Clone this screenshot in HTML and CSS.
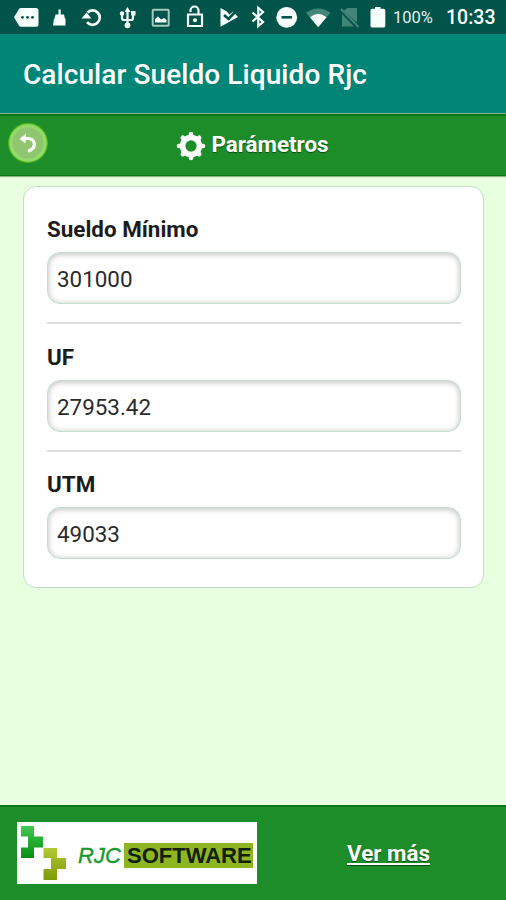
FILE: index.html
```html
<!DOCTYPE html>
<html lang="es">
<head>
<meta charset="utf-8">
<title>Calcular Sueldo Liquido Rjc</title>
<link rel="stylesheet" href="styles.css">
</head>
<body>
<div class="status">
  <svg viewBox="10 0 34 34"><path d="M14 17.3l5-8.4q.8-1 2-1H36q2.500 0 2.500 2.500v13.800q0 2.500-2.500 2.500H21q-1.200 0-2-1z"/><g class="dark"><circle cx="22.500" cy="17.300" r="1.400"/><circle cx="27.500" cy="17.300" r="1.400"/><circle cx="32.500" cy="17.300" r="1.400"/></g></svg>
  <svg viewBox="44 0 32 34"><path d="M58.500 9.500h2.200v5H64l1 4.500H54.500L55.500 14.500h3zM54 18.500h11.500v7H53z"/></svg>
  <svg viewBox="76 0 34 34"><path class="line w3" d="M87.500 12.500A7.200 7.200 0 1 1 87 22.200M86.500 14v3"/><path d="M81.500 18.500l5-6 5 6z"/></svg>
  <svg viewBox="110 0 34 34"><path class="line w2" d="M127.500 11v14M122 15v3q0 2 2 2h7q2 0 2-2v-5"/><path d="M124.500 12l3-5 3 5zM131 11h4.500v4.500H131z"/><circle cx="122" cy="13.500" r="2.200"/><circle cx="127.500" cy="25.300" r="2.900"/></svg>
  <svg viewBox="144 0 34 34"><rect class="soft" x="152.700" y="9.700" width="16" height="16" rx="1"/><path d="M155 22.500V19l3-2.500 3 3 3-1.500 2.500 2v2.500z"/></svg>
  <svg viewBox="178 0 34 34"><path class="line w2" d="M190.500 12v-1.500a4 4 0 0 1 8 0V14M188 14.500h14V26h-14z"/><circle cx="195" cy="20.300" r="2"/></svg>
  <svg viewBox="212 0 32 34"><path d="M220.500 8l6 3.300 3 3.200 3.500-3 5 5.500-17.500 9.700z"/><path class="line darkline" d="M224 15l4.500 4 7-7.500"/></svg>
  <svg viewBox="244 0 28 34"><path class="line w2" d="M252.500 12.500l10.500 9.500-4.700 4V8l4.700 4-10.500 9.500"/></svg>
  <svg viewBox="272 0 30 34"><circle cx="286.700" cy="17.400" r="10.400"/><path class="darkline" d="M281.500 17.300h10.500"/></svg>
  <svg viewBox="302 0 32 34"><path class="faint" d="M306 12.700q12-8.600 24.500 0L318.200 27z"/><path d="M310 17.200q8.200-7 16.500 0l-8.300 10z"/></svg>
  <svg viewBox="334 0 30 34"><path class="faint" d="M347.500 8H357v14.500L343.500 11zM342 14l12 12.500h-12z"/><path class="faintline" d="M341 9l17.500 18"/></svg>
  <svg viewBox="364 0 29 34"><path d="M375 7h5.500v1.700h3q1.800 0 1.800 1.800V26q0 1.500-1.800 1.500h-11.200q-1.800 0-1.800-1.500V10.500q0-1.800 1.800-1.800H375z"/></svg>
  <span class="battery">100%</span>
  <span class="clock">10:33</span>
</div>
<header class="appbar">Calcular Sueldo Liquido Rjc</header>
<div class="toolbar">
  <svg class="back" viewBox="0 0 42 42"><circle class="ring" cx="21" cy="21" r="19.300"/><circle class="disc" cx="21" cy="21" r="15.500"/><path class="arrow" d="M16 16.500h4.500c8 0 10 9.500.5 12.800"/><path class="head" d="M12.500 17l6.500-5.500-.5 10z"/></svg>
  <h1>
    <svg class="gear" viewBox="-15 -15 30 30"><circle class="hub" r="8.400"/><g class="teeth"><path d="M0-9.500v-2.500M0 9.500v2.500M9.500 0h2.500M-9.500 0h-2.500M7-7l1.200-1.200M7 7l1.200 1.200M-7-7l-1.200-1.200M-7 7l-1.200 1.200"/></g></svg>
    <span>Parámetros</span>
  </h1>
</div>
<main>
  <form class="card">
    <div class="field"><label for="sm">Sueldo Mínimo</label><input id="sm" value="301000"></div>
    <div class="field"><label for="uf">UF</label><input id="uf" value="27953.42"></div>
    <div class="field"><label for="utm">UTM</label><input id="utm" value="49033"></div>
  </form>
</main>
<footer>
  <div class="logo">
    <svg viewBox="0 0 49 62">
      <defs>
        <linearGradient id="g" x1="0" y1="0" x2="0" y2="1"><stop offset="0" stop-color="#43c954"/><stop offset="1" stop-color="#078d10"/></linearGradient>
        <linearGradient id="l" x1="0" y1="0" x2="0" y2="1"><stop offset="0" stop-color="#b4c936"/><stop offset="1" stop-color="#7c9c08"/></linearGradient>
      </defs>
      <path fill="url(#g)" d="M4 4h13v10.500h9v11h-9V36H4V25.500h7v-11H4z"/>
      <path fill="url(#l)" d="M26.500 26H40v10h9v11h-9v11H26.500V47h7.500V36h-7.500z"/>
    </svg>
    <span class="rjc">RJC</span><span class="soft-name">SOFTWARE</span>
  </div>
  <a href="#">Ver más</a>
</footer>
</body>
</html>
```
FILE: styles.css
```css
* { box-sizing: border-box; }
body {
  margin: 0;
  height: 900px;
  display: flex;
  flex-direction: column;
  background: #e8ffe0;
  font-family: Roboto, sans-serif;
  overflow: hidden;
}
.status {
  height: 34px;
  padding-left: 10px;
  display: grid;
  grid-template-columns: 34px 32px 34px 34px 34px 34px 32px 28px 30px 32px 30px 29px 53px 60px;
  background: #005449;
  color: #fff;
  line-height: 36px;
  white-space: nowrap;
}
.status svg { display: block; width: 100%; height: 34px; fill: #f7fffd; }
.status .line { fill: none; stroke: #f7fffd; }
.status .w3 { stroke-width: 2.7; }
.status .w2 { stroke-width: 2.2; }
.status .dark { fill: #005449; }
.status .darkline { stroke: #005449; stroke-width: 2.6; fill: none; }
.status .soft { fill: none; stroke: #a8c8c2; stroke-width: 2; }
.status .faint { fill: #438579; }
.status .faintline { stroke: #438579; stroke-width: 2; }
.battery { font-size: 16.5px; color: #e3efed; }
.clock { font-size: 19.5px; font-weight: 500; }
.appbar {
  height: 80px;
  padding-left: 23px;
  border-bottom: 1px solid #75b58d;
  background: #008577;
  color: #fff;
  font-size: 28px;
  font-weight: 500;
  letter-spacing: .08px;
  line-height: 82px;
}
.toolbar {
  height: 62px;
  padding-left: 7px;
  display: grid;
  grid-template-columns: 42px 1fr 50px;
  align-items: center;
  background: #1d8d2a;
  border-top: 2px solid #0a7513;
  border-bottom: 1px solid #0a7513;
  box-shadow: 0 1px 1px #8eb98b;
}
.back { width: 42px; height: 42px; margin-top: -6px; }
.ring { fill: #93dc6b; stroke: #58b91d; stroke-width: 1.2; }
.disc { fill: #8fc66f; }
.arrow { fill: none; stroke: #fff; stroke-width: 3.2; }
.head { fill: #fff; }
h1 {
  margin: -3px 0 0;
  display: flex;
  align-items: center;
  justify-content: center;
  gap: 5px;
  color: #fff;
  font-size: 22.4px;
  font-weight: 700;
  line-height: 30px;
  text-shadow: 0 1px 1px #064d0c;
}
.gear { width: 30px; height: 30px; margin-top: 4px; }
.hub { fill: none; stroke: #fff; stroke-width: 5.5; }
.teeth { stroke: #fff; stroke-width: 4.6; stroke-linecap: round; }
main { flex: 1; padding: 10px 22px 0 23px; }
.card {
  height: 402px;
  padding: 27px 22px 0 23px;
  border: 1px solid #bfdfc5;
  border-radius: 13px;
  background: #fff;
}
.field:first-child { height: 108px; }
.field + .field { height: 128px; padding-top: 18px; border-top: 2px solid #dedede; }
.field + .field + .field { height: 127px; padding-top: 17px; }
label {
  display: block;
  height: 38px;
  font-size: 22.4px;
  font-weight: 700;
  line-height: 31px;
  color: #1c1c1c;
}
input {
  display: block;
  width: 100%;
  height: 52px;
  padding: 1px 9px 0;
  border: 1.500px solid #c3dccb;
  border-radius: 13px;
  background: #fff;
  box-shadow: inset 0 1px 6px #bbb;
  color: #2b2b2b;
  font: 22.400px Roboto, sans-serif;
}
footer {
  height: 95px;
  padding: 15px 0 0 17px;
  display: grid;
  grid-template-columns: 240px 1fr;
  border-top: 2px solid #0a7513;
  background: #1d8d2a;
}
.logo {
  height: 62px;
  display: flex;
  align-items: center;
  background: #fff;
  font-family: "Liberation Sans", sans-serif;
  font-size: 22px;
  line-height: 24px;
}
.logo svg { width: 49px; height: 62px; }
.rjc { width: 58px; padding: 5px 0 0 12px; font-style: italic; color: #169b29; -webkit-text-stroke: .4px #169b29; }
.soft-name {
  width: 129px;
  height: 25px;
  margin-top: 4px;
  padding-left: 3px;
  background: #8fb522;
  color: #10200a;
  font-weight: 700;
  line-height: 26px;
}
footer a {
  padding: 14px 0 0 90px;
  color: #fff;
  font-size: 22.4px;
  font-weight: 700;
  line-height: 34px;
  text-shadow: 0 1px 1px #064d0c;
}
```
